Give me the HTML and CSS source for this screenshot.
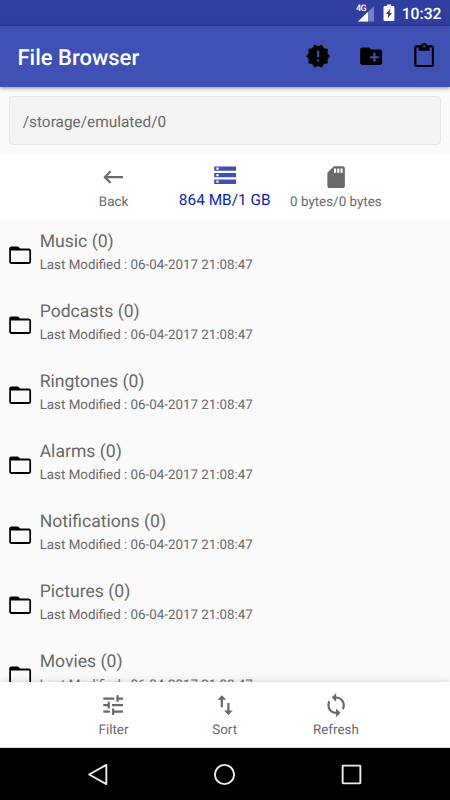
FILE: index.html
```html
<!DOCTYPE html>
<html lang="en">
<head>
<meta charset="utf-8">
<title>File Browser</title>
<link rel="stylesheet" href="styles.css">
</head>
<body>
<div class="screen">
  <div class="status">
    <svg class="signal" width="21" height="18" viewBox="0 0 21 18"><path d="M20 1v15.500H4z" fill="#7781bd"/><path d="M14 7v9.500H4z" fill="#fff"/></svg>
    <span class="network">4G</span>
    <svg class="battery" width="12" height="18" viewBox="0 0 12 18"><path d="M4 .5h4v1.500h2.200c.7 0 1.200.5 1.200 1.200v12.600c0 .7-.5 1.200-1.200 1.200H1.700c-.7 0-1.200-.5-1.200-1.200V3.200c0-.7.5-1.200 1.200-1.200H4z" fill="#fff"/><path d="M7.300 4.500L3 10h2.300L4.700 14.500 9 9H6.700z" fill="#303f9f"/></svg>
    <span class="clock">10:32</span>
  </div>
  <header class="appbar">
    <h1>File Browser</h1>
    <div class="actions">
      <svg class="icon" viewBox="0 0 24 24"><path d="M23 12l-2.440-2.780.34-3.680-3.610-.82-1.890-3.180L12 3 8.600 1.540 6.710 4.720l-3.610.81.34 3.680L1 12l2.440 2.780-.34 3.690 3.610.82 1.890 3.180L12 21l3.400 1.460 1.890-3.180 3.610-.82-.34-3.680L23 12zm-10 5h-2v-2h2v2zm0-4h-2V7h2v6z"/></svg>
      <svg class="icon" viewBox="0 0 24 24"><path d="M20 6h-8l-2-2H4c-1.110 0-1.990.89-1.990 2L2 18c0 1.110.89 2 2 2h16c1.110 0 2-.89 2-2V8c0-1.110-.89-2-2-2zm-1 8h-3v3h-2v-3h-3v-2h3V9h2v3h3v2z"/></svg>
      <svg class="icon" viewBox="0 0 24 24"><path d="M19 2h-4.180C14.400.84 13.300 0 12 0c-1.300 0-2.400.84-2.820 2H5c-1.100 0-2 .9-2 2v16c0 1.100.9 2 2 2h14c1.100 0 2-.9 2-2V4c0-1.100-.9-2-2-2zm-7 0c.55 0 1 .45 1 1s-.45 1-1 1-1-.45-1-1 .45-1 1-1zm7 18H5V4h2v3h10V4h2v16z"/></svg>
    </div>
  </header>
  <main class="content">
    <div class="path">/storage/emulated/0</div>
    <nav class="tabs top">
      <div class="tab"><svg class="icon" viewBox="0 0 24 24"><path d="M21 11H6.830l3.580-3.590L9 6l-6 6 6 6 1.410-1.410L6.830 13H21z"/></svg><span>Back</span></div>
      <div class="tab active"><svg class="icon" viewBox="0 0 24 24"><path d="M2 20h20v-4H2v4zm2-3h2v2H4v-2zM2 4v4h20V4H2zm4 3H4V5h2v2zm-4 7h20v-4H2v4zm2-3h2v2H4v-2z"/></svg><span>864 MB/1 GB</span></div>
      <div class="tab"><svg class="icon" viewBox="0 0 24 24"><path d="M18 2h-8L4.020 8 4 20c0 1.100.9 2 2 2h12c1.100 0 2-.9 2-2V4c0-1.100-.9-2-2-2zm-6 6h-2V4h2v4zm3 0h-2V4h2v4zm3 0h-2V4h2v4z"/></svg><span>0 bytes/0 bytes</span></div>
    </nav>
    <svg class="defs" width="0" height="0"><symbol id="folder" viewBox="0 0 24 24"><path d="M20 6h-8l-2-2H4c-1.100 0-1.990.9-1.990 2L2 18c0 1.100.9 2 2 2h16c1.100 0 2-.9 2-2V8c0-1.100-.9-2-2-2zm.4 12.300H3.600V7.700h16.800v10.600z"/></symbol></svg>
    <ul class="files">
      <li><svg class="icon"><use href="#folder"/></svg><div><div class="name">Music (0)</div><div class="date">Last Modified : 06-04-2017 21:08:47</div></div></li>
      <li><svg class="icon"><use href="#folder"/></svg><div><div class="name">Podcasts (0)</div><div class="date">Last Modified : 06-04-2017 21:08:47</div></div></li>
      <li><svg class="icon"><use href="#folder"/></svg><div><div class="name">Ringtones (0)</div><div class="date">Last Modified : 06-04-2017 21:08:47</div></div></li>
      <li><svg class="icon"><use href="#folder"/></svg><div><div class="name">Alarms (0)</div><div class="date">Last Modified : 06-04-2017 21:08:47</div></div></li>
      <li><svg class="icon"><use href="#folder"/></svg><div><div class="name">Notifications (0)</div><div class="date">Last Modified : 06-04-2017 21:08:47</div></div></li>
      <li><svg class="icon"><use href="#folder"/></svg><div><div class="name">Pictures (0)</div><div class="date">Last Modified : 06-04-2017 21:08:47</div></div></li>
      <li><svg class="icon"><use href="#folder"/></svg><div><div class="name">Movies (0)</div><div class="date">Last Modified : 06-04-2017 21:08:47</div></div></li>
    </ul>
  </main>
  <nav class="tabs bottom">
    <div class="tab"><svg class="icon" viewBox="0 0 24 24"><path d="M3 17v2h6v-2H3zM3 5v2h10V5H3zm10 16v-2h8v-2h-8v-2h-2v6h2zM7 9v2H3v2h4v2h2V9H7zm14 4v-2H11v2h10zm-6-4h2V7h4V5h-4V3h-2v6z"/></svg><span>Filter</span></div>
    <div class="tab"><svg class="icon" viewBox="0 0 24 24"><path d="M16 17.010V10h-2v7.010h-3L15 21l4-3.990h-3zM9 3L5 6.990h3V14h2V6.990h3L9 3z"/></svg><span>Sort</span></div>
    <div class="tab"><svg class="icon" viewBox="0 0 24 24"><path d="M12 4V1L8 5l4 4V6c3.310 0 6 2.690 6 6 0 1.010-.25 1.970-.7 2.800l1.460 1.460C19.540 15.030 20 13.570 20 12c0-4.420-3.580-8-8-8zm0 14c-3.310 0-6-2.690-6-6 0-1.010.25-1.970.7-2.800L5.240 7.740C4.460 8.970 4 10.430 4 12c0 4.420 3.580 8 8 8v3l4-4-4-4v3z"/></svg><span>Refresh</span></div>
  </nav>
  <footer class="system">
    <svg viewBox="0 0 24 24"><path d="M19.500 2.800v18.400L3 12z"/></svg>
    <svg viewBox="0 0 24 24"><circle cx="12" cy="12" r="9.200"/></svg>
    <svg viewBox="0 0 24 24"><rect x="3.500" y="3.500" width="17" height="17" rx=".5"/></svg>
  </footer>
</div>
</body>
</html>
```
FILE: styles.css
```css
* { box-sizing: border-box; }
body { margin: 0; font-family: Roboto, sans-serif; color: #696969; text-rendering: geometricPrecision; }
.screen { width: 450px; height: 800px; display: flex; flex-direction: column; overflow: hidden; background: #fafafa; }
.icon { width: 26.25px; height: 26.25px; flex: none; display: block; fill: currentColor; }
.status { position: relative; flex: none; height: 26px; background: #303f9f; color: #fff; display: flex; align-items: center; justify-content: flex-end; padding: 1px 8.500px 0 0; }
.signal { margin: 0 8px 0 0; }
.network { position: absolute; left: 356px; top: 4px; font-size: 9px; line-height: 10px; font-weight: 500; letter-spacing: -.7px; }
.battery { margin-right: 6.500px; margin-top: -1px; }
.clock { font-size: 15.7px; font-weight: 500; line-height: 24px; }
.appbar { position: relative; z-index: 2; flex: none; height: 61px; background: #3f51b5; color: #fff; display: flex; align-items: center; justify-content: space-between; padding: 0 13px 0 17.5px; box-shadow: 0 1px 4px rgba(0,0,0,.45); }
.appbar h1 { margin: 5px 0 0; font-size: 22px; line-height: 28px; font-weight: 500; }
.actions { display: flex; gap: 26.800px; color: #000; }
.content { flex: 1; min-height: 0; overflow: hidden; padding-top: 9px; }
.path { height: 49px; margin: 0 9px; padding-left: 12.700px; border: 1px solid #e6e6e6; border-radius: 4px; background: #f4f4f4; font-size: 15.4px; line-height: 50px; }
.tabs { display: flex; justify-content: center; background: #fff; padding-right: .6px; }
.tab { width: 111.2px; display: flex; flex-direction: column; align-items: center; font-size: 13.4px; line-height: 16px; color: #696969; white-space: nowrap; }
.top { height: 67px; margin-top: 8px; padding-top: 11px; }
.top .tab span { margin-top: 5px; }
.top .active { color: #3f51b5; margin-top: -2px; }
.top .tab.active span { color: #0a1fb0; margin-top: 3px; font-size: 15.4px; line-height: 18px; }
.defs { display: block; }
.files { list-style: none; margin: 0; padding: 0; }
.files li { height: 70px; display: flex; align-items: flex-start; gap: 6.500px; padding-left: 6.900px; }
.files .icon { color: #000; margin-top: 21.500px; }
.name { margin-top: 11px; font-size: 17.6px; line-height: 23px; }
.date { margin-top: 3px; font-size: 13.35px; line-height: 17px; }
.bottom { position: relative; z-index: 2; flex: none; height: 66px; padding-top: 10px; box-shadow: 0 0 7px rgba(0,0,0,.18); border-bottom: 1px solid #ddd; }
.bottom .tab span { margin-top: 5px; }
.system { position: relative; z-index: 3; flex: none; height: 52px; background: #000; display: flex; justify-content: center; align-items: center; gap: 101.500px; padding-right: .6px; }
.system svg { width: 25px; height: 25px; fill: none; stroke: #eee; stroke-width: 1.8; stroke-linejoin: round; }
```
